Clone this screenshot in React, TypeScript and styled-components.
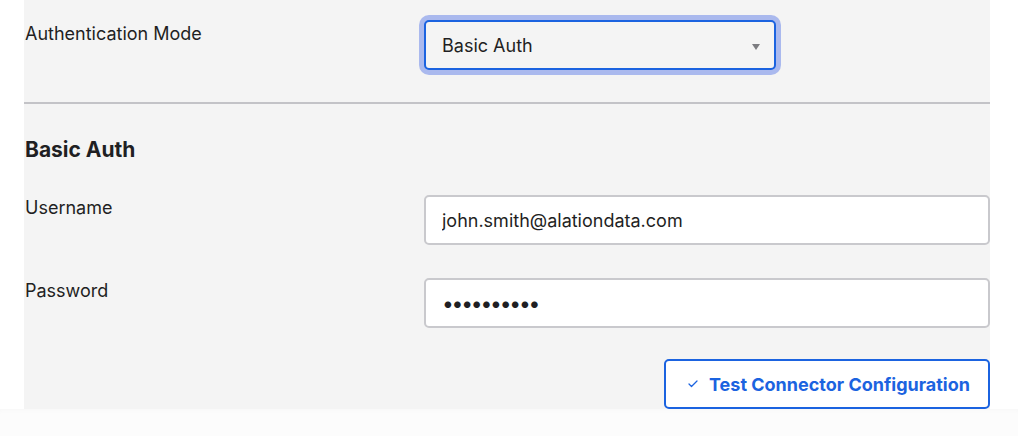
import React from "react";
import styled, { createGlobalStyle } from "styled-components";
import { Check } from "lucide-react";

const Global = createGlobalStyle`
  html, body { margin: 0; padding: 0; background: #ffffff; }
  body { font-family: Inter, "Noto Sans", "Liberation Sans", sans-serif; color: #1f1f23; }
  * { box-sizing: border-box; }
`;

const Page = styled.div`
  width: 1018px;
  height: 436px;
  display: flex;
  flex-direction: column;
  background: #ffffff;
`;

const Panel = styled.div`
  margin-left: 24px;
  width: 966px;
  background: #f4f4f4;
  display: flex;
  flex-direction: column;
`;

const Row = styled.div<{ $top?: number; $bottom?: number }>`
  display: grid;
  grid-template-columns: 400px 1fr;
  align-items: start;
  padding-top: ${(p) => p.$top ?? 0}px;
  padding-bottom: ${(p) => p.$bottom ?? 0}px;
`;

const Label = styled.div<{ $offset?: number }>`
  padding-left: 1px;
  padding-top: ${(p) => p.$offset ?? 0}px;
  font-size: 18px;
  line-height: 24px;
  color: #1f1f23;
`;

const Divider = styled.div`
  height: 2px;
  background: #c3c3c7;
`;

const Heading = styled.h3`
  margin: 32px 0 0 1px;
  font-size: 21px;
  line-height: 28px;
  font-weight: 700;
  color: #1f1f23;
`;

const SelectBox = styled.div`
  width: 352px;
  height: 50px;
  border: 2px solid #1b63e0;
  border-radius: 5px;
  box-shadow: 0 0 0 5px #aab9ee;
  background: #f4f4f4;
  display: flex;
  align-items: center;
  justify-content: space-between;
  padding: 0 14px 0 16px;
  font-size: 18px;
  color: #1f1f23;
`;

const Caret = styled.span`
  width: 0;
  height: 0;
  border-left: 4.5px solid transparent;
  border-right: 4.5px solid transparent;
  border-top: 6px solid #7c7c80;
  margin-top: 3px;
`;

const TextInput = styled.input`
  width: 100%;
  height: 50px;
  border: 2px solid #c9c9cd;
  border-radius: 5px;
  background: #ffffff;
  padding: 0 16px;
  font-family: Inter, "Noto Sans", "Liberation Sans", sans-serif;
  font-size: 18px;
  color: #1f1f23;
  outline: none;
  &[type="password"] {
    font-size: 21px;
    letter-spacing: -2.2px;
  }
`;

const Actions = styled.div`
  display: flex;
  justify-content: flex-end;
  padding-top: 31px;
`;

const Button = styled.button`
  height: 50px;
  width: 326px;
  border: 2px solid #1b63e0;
  border-radius: 5px;
  background: #ffffff;
  display: flex;
  align-items: center;
  gap: 10px;
  padding: 0 0 0 21px;
  font-family: Inter, "Noto Sans", "Liberation Sans", sans-serif;
  font-size: 18px;
  font-weight: 700;
  color: #1b63e0;
  cursor: pointer;
  white-space: nowrap;
`;

const Footer = styled.div`
  flex: 1;
  background: #fcfcfc;
  box-shadow: inset 0 4px 6px -4px rgba(0, 0, 0, 0.03);
`;

export default function App() {
  return (
    <Page>
      <Global />
      <Panel>
        <Row $top={20} $bottom={32}>
          <Label $offset={2}>Authentication Mode</Label>
          <SelectBox>
            <span>Basic Auth</span>
            <Caret />
          </SelectBox>
        </Row>
        <Divider />
        <Heading>Basic Auth</Heading>
        <Row $top={31}>
          <Label $offset={1}>Username</Label>
          <TextInput readOnly defaultValue="john.smith@alationdata.com" />
        </Row>
        <Row $top={33}>
          <Label $offset={1}>Password</Label>
          <TextInput readOnly type="password" defaultValue="abcdefghij" />
        </Row>
        <Actions>
          <Button>
            <Check size={12} strokeWidth={2.5} />
            Test Connector Configuration
          </Button>
        </Actions>
      </Panel>
      <Footer />
    </Page>
  );
}
